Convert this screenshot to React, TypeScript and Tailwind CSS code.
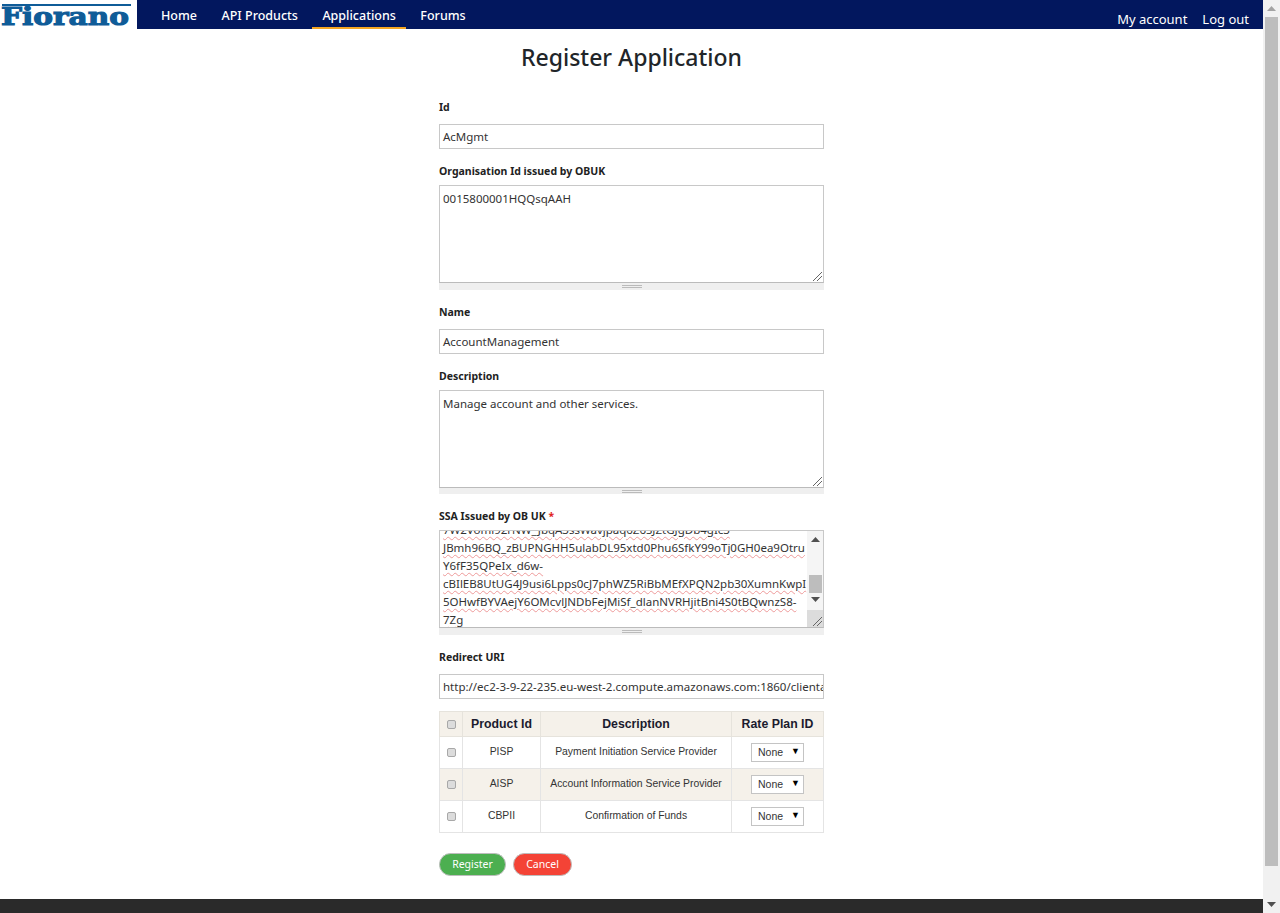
const font = "font-['Noto_Sans','Open_Sans',sans-serif]";

function Label({ children, className = "" }: { children: React.ReactNode; className?: string }) {
  return <div className={`text-[10.5px] leading-[16px] font-bold text-[#222] ${className}`}>{children}</div>;
}

function Input({ value }: { value: string }) {
  return (
    <div className="h-[25px] border border-[#c8c8c8] bg-white pl-[3px] pr-0 text-[11.5px] leading-[24.5px] text-[#333] overflow-hidden whitespace-nowrap">
      {value}
    </div>
  );
}

function Grip({ short = false }: { short?: boolean }) {
  return (
    <div className={`${short ? "h-[6px]" : "h-[7px]"} bg-[#efefef] flex flex-col items-center justify-center gap-px`}>
      <div className="w-[20px] h-px bg-[#bbb]" />
      <div className="w-[20px] h-px bg-[#bbb]" />
    </div>
  );
}

function ResizeMark() {
  return (
    <svg width="12" height="12" viewBox="0 0 12 12" className="block">
      <path d="M2 11 L11 2 M6 11 L11 6" stroke="#666" strokeWidth="1" fill="none" />
    </svg>
  );
}

function Area({ value, short = false }: { value: string; short?: boolean }) {
  return (
    <div>
      <div className="h-[98px] border border-[#c8c8c8] border-b-[#bbb] bg-white flex flex-col">
        <div className="flex-1 pl-[3px] pt-[4px] text-[11.5px] leading-[18px] text-[#333]">{value}</div>
        <div className="flex justify-end">
          <ResizeMark />
        </div>
      </div>
      <Grip short={short} />
    </div>
  );
}

function Squiggle({ children }: { children: React.ReactNode }) {
  return <span className="underline decoration-wavy decoration-[#ee9a9a] decoration-1 underline-offset-2">{children}</span>;
}

function SsaArea() {
  const lines = [
    "7W2Vomi92rNW_JbqA3ssWavjpaq6Z6SJZtGJgDb4gIc3",
    "JBmh96BQ_zBUPNGHH5ulabDL95xtd0Phu6SfkY99oTj0GH0ea9Otru",
    "Y6fF35QPeIx_d6w-",
    "cBIlEB8UtUG4J9usi6Lpps0cJ7phWZ5RiBbMEfXPQN2pb30XumnKwpI",
    "5OHwfBYVAejY6OMcvlJNDbFejMiSf_dlanNVRHjitBni4S0tBQwnzS8-",
    "7Zg",
  ];
  return (
    <div>
      <div className="h-[98px] border border-[#c8c8c8] border-b-[#bbb] bg-white flex overflow-hidden">
        <div className="flex-1 min-w-0 mb-[-2px] pl-[3px] text-[11.5px] leading-[18px] text-[#333] flex flex-col justify-end overflow-hidden whitespace-nowrap">
          {lines.map((l) => (
            <div key={l}>
              <Squiggle>{l}</Squiggle>
            </div>
          ))}
        </div>
        <div className="w-[16px] bg-[#f5f5f5] flex flex-col items-center shrink-0">
          <svg width="9" height="5" viewBox="0 0 9 5" className="mt-[6px]">
            <path d="M4.5 0 L9 5 L0 5 Z" fill="#505050" />
          </svg>
          <div className="mt-[33px] w-[13px] h-[18px] bg-[#bdbdbd]" />
          <svg width="9" height="5" viewBox="0 0 9 5" className="mt-[4px]">
            <path d="M0 0 L9 0 L4.5 5 Z" fill="#505050" />
          </svg>
          <div className="mt-auto h-[17px] w-full bg-[#dcdcdc] flex items-end justify-end">
            <ResizeMark />
          </div>
        </div>
      </div>
      <Grip />
    </div>
  );
}

function Check() {
  return <div className="w-[9px] h-[9px] mx-auto bg-[#dcdcdc] border border-[#a8a8a8] rounded-[2px]" />;
}

function RateSelect() {
  return (
    <div className="mx-auto w-[53px] h-[19px] border border-[#c4c4c4] bg-white flex items-center justify-between pl-[6px] pr-[3px] text-[10.5px] text-[#333]">
      <span>None</span>
      <span className="text-[9px] text-black leading-none pb-[2px]">▼</span>
    </div>
  );
}

const rows = [
  { id: "PISP", desc: "Payment Initiation Service Provider", bg: "bg-white" },
  { id: "AISP", desc: "Account Information Service Provider", bg: "bg-[#f5f1ea]" },
  { id: "CBPII", desc: "Confirmation of Funds", bg: "bg-white" },
];

function ProductTable() {
  return (
    <table className="w-[384px] border-collapse table-fixed font-['Liberation_Sans',Arial,sans-serif]">
      <colgroup>
        <col className="w-[23px]" />
        <col className="w-[78px]" />
        <col className="w-[191px]" />
        <col className="w-[92px]" />
      </colgroup>
      <thead>
        <tr className="h-[25px] bg-[#f5f1ea] text-[12.3px] font-bold text-[#1b1b2e]">
          <th className="border border-[#e6e3dc] p-0"><Check /></th>
          <th className="border border-[#e6e3dc] p-0">Product Id</th>
          <th className="border border-[#e6e3dc] p-0">Description</th>
          <th className="border border-[#e6e3dc] p-0">Rate Plan ID</th>
        </tr>
      </thead>
      <tbody>
        {rows.map((r) => (
          <tr key={r.id} className={`h-[32px] ${r.bg} text-[10.4px] text-[#333] text-center`}>
            <td className="border border-[#e4e4e4] p-0"><Check /></td>
            <td className="border border-[#e4e4e4] p-0 pb-[2px]">{r.id}</td>
            <td className="border border-[#e4e4e4] p-0 pb-[2px]">{r.desc}</td>
            <td className="border border-[#e4e4e4] p-0"><RateSelect /></td>
          </tr>
        ))}
      </tbody>
    </table>
  );
}

function Logo() {
  return (
    <div className="w-[137px] h-[29px] bg-white shrink-0 overflow-hidden">
      <svg width="137" height="29" viewBox="0 0 137 29" className="block">
        <rect x="2" y="4" width="129" height="2" fill="#0f5c98" />
        <text
          x="1"
          y="25"
          textLength="128"
          lengthAdjust="spacingAndGlyphs"
          fontFamily="'DejaVu Serif','Liberation Serif',serif"
          fontWeight="700"
          fontSize="25"
          fill="#0f5c98"
          stroke="#0f5c98"
          strokeWidth="1.1"
        >
          Fiorano
        </text>
      </svg>
    </div>
  );
}

function NavItem({ children, active = false }: { children: React.ReactNode; active?: boolean }) {
  return (
    <div
      className={`h-[29px] px-[10.5px] mr-[3.5px] text-[12.5px] leading-[31px] font-medium text-white ${
        active ? "border-b-2 border-[#f5a623]" : ""
      }`}
    >
      {children}
    </div>
  );
}

function PageScrollbar() {
  return (
    <div className="w-[17px] h-[913px] bg-[#f1f1f1] shrink-0 flex flex-col items-center">
      <svg width="9" height="5" viewBox="0 0 9 5" className="mt-[6px]">
        <path d="M4.5 0 L9 5 L0 5 Z" fill="#a3a3a3" />
      </svg>
      <div className="mt-[6px] w-[13px] h-[849px] bg-[#bdbdbd]" />
      <div className="flex-1" />
      <svg width="9" height="5" viewBox="0 0 9 5" className="mb-[6px]">
        <path d="M0 0 L9 0 L4.5 5 Z" fill="#505050" />
      </svg>
    </div>
  );
}

export default function App() {
  return (
    <div className={`flex h-[913px] w-[1280px] overflow-hidden bg-white ${font}`}>
      <div className="flex-1 flex flex-col min-w-0">
        <header className="h-[29px] bg-[#02175e] flex shrink-0">
          <Logo />
          <nav className="flex pl-[13.5px]">
            <NavItem>Home</NavItem>
            <NavItem>API Products</NavItem>
            <NavItem active>Applications</NavItem>
            <NavItem>Forums</NavItem>
          </nav>
          <div className="ml-auto flex gap-[15px] pr-[14px] pt-[9px] text-[13px] leading-[20px] text-white">
            <span>My account</span>
            <span>Log out</span>
          </div>
        </header>

        <main className="flex-1 flex flex-col items-center">
          <h1 className="mt-[12px] h-[34px] text-[23px] leading-[33px] font-medium text-[#212529]">Register Application</h1>
          <div className="w-[385px] mt-[24px] flex flex-col">
            <Label>Id</Label>
            <div className="mt-[9px]"><Input value="AcMgmt" /></div>
            <Label className="mt-[14px]">Organisation Id issued by OBUK</Label>
            <div className="mt-[6px]"><Area value="0015800001HQQsqAAH" /></div>
            <Label className="mt-[14px]">Name</Label>
            <div className="mt-[9px]"><Input value="AccountManagement" /></div>
            <Label className="mt-[14px]">Description</Label>
            <div className="mt-[6px]"><Area short value="Manage account and other services." /></div>
            <Label className="mt-[14px]">
              SSA Issued by OB UK <span className="text-[#e02020]">*</span>
            </Label>
            <div className="mt-[6px]"><SsaArea /></div>
            <Label className="mt-[14px]">Redirect URI</Label>
            <div className="mt-[9px]">
              <Input value="http://ec2-3-9-22-235.eu-west-2.compute.amazonaws.com:1860/clientapp/callback" />
            </div>
            <div className="mt-[12px]"><ProductTable /></div>
            <div className="mt-[20px] flex gap-[7px]">
              <button className="w-[67px] h-[23px] rounded-full bg-[#4caf50] border border-[#bdbdbd] text-white text-[10.5px] leading-none">
                Register
              </button>
              <button className="w-[59px] h-[23px] rounded-full bg-[#f44336] border border-[#bdbdbd] text-white text-[10.5px] leading-none">
                Cancel
              </button>
            </div>
          </div>
        </main>

        <footer className="h-[14px] bg-[#2a2a2a] shrink-0" />
      </div>
      <PageScrollbar />
    </div>
  );
}
